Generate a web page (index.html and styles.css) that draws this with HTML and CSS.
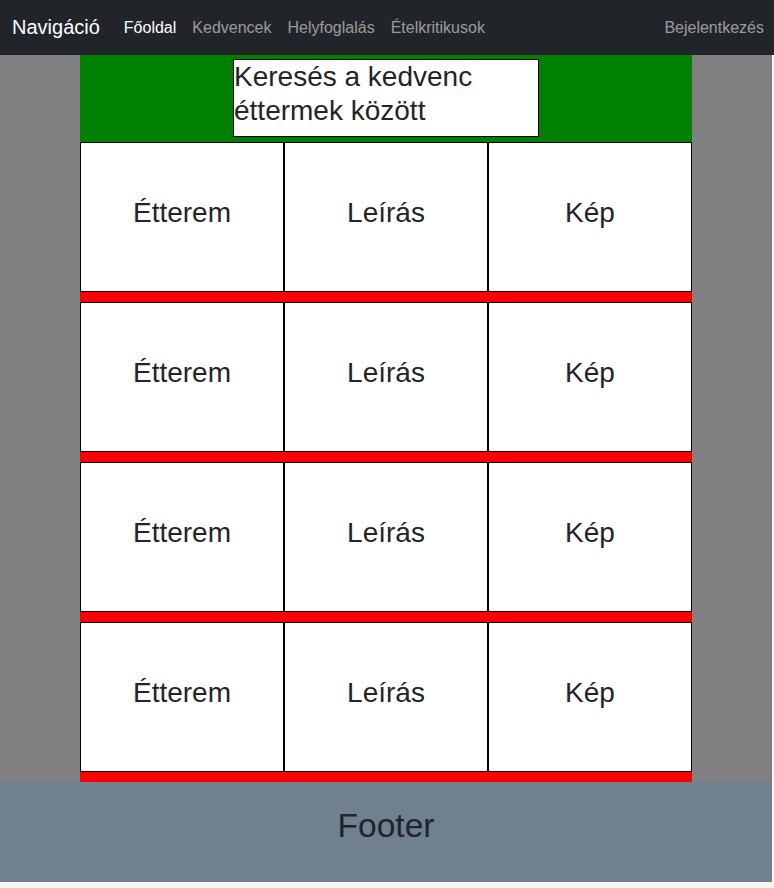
FILE: index.html
```html
<!DOCTYPE html>
<html lang="hu">
<head>
<meta charset="utf-8">
<title>Navigáció</title>
<link rel="stylesheet" href="styles.css">
</head>
<body>
<nav class="navbar">
  <a class="brand" href="#">Navigáció</a>
  <ul class="nav-links">
    <li><a class="nav-link active" href="#">Főoldal</a></li>
    <li><a class="nav-link" href="#">Kedvencek</a></li>
    <li><a class="nav-link" href="#">Helyfoglalás</a></li>
    <li><a class="nav-link" href="#">Ételkritikusok</a></li>
  </ul>
  <a class="nav-link login" href="#">Bejelentkezés</a>
</nav>
<div class="page">
  <main class="main">
    <header class="search-bar">
      <div class="search">Keresés a kedvenc éttermek között</div>
    </header>
    <section class="list">
      <div class="row"><div class="cell">Étterem</div><div class="cell">Leírás</div><div class="cell">Kép</div></div>
      <div class="row"><div class="cell">Étterem</div><div class="cell">Leírás</div><div class="cell">Kép</div></div>
      <div class="row"><div class="cell">Étterem</div><div class="cell">Leírás</div><div class="cell">Kép</div></div>
      <div class="row"><div class="cell">Étterem</div><div class="cell">Leírás</div><div class="cell">Kép</div></div>
    </section>
  </main>
  <footer class="footer">Footer</footer>
</div>
</body>
</html>
```
FILE: styles.css
```css
* { box-sizing: border-box; }
html, body { margin: 0; padding: 0; background: #f6f6f6; }
body {
  font-family: "Liberation Sans", Arial, sans-serif;
  color: #212529;
}
a { text-decoration: none; }

.navbar {
  height: 55px;
  background: #212529;
  display: flex;
  align-items: center;
  padding: 0 10px 0 12px;
}
.brand {
  color: #fff;
  font-size: 20px;
  line-height: 23px;
  margin-right: 16px;
}
.nav-links {
  list-style: none;
  margin: 0;
  padding: 0;
  display: flex;
  flex: 1;
}
.nav-link {
  display: block;
  color: rgba(255, 255, 255, 0.55);
  font-size: 16px;
  line-height: 22px;
  padding: 0 8px;
}
.nav-link.active { color: #fff; }
.nav-link.login { padding-right: 0; }

.page {
  margin-right: 2px;
  background: #808080;
}
.main {
  width: 612px;
  margin: 0 auto;
}
.search-bar {
  background: #008000;
  padding: 4px 0 5px;
}
.search {
  width: 306px;
  height: 78px;
  margin: 0 auto;
  background: #fff;
  border: 1px solid #000;
  font-size: 28px;
  line-height: 1.2;
  color: #212529;
}
.row {
  display: flex;
  border-bottom: 10px solid #ff0000;
}
.cell {
  width: 204px;
  height: 150px;
  background: #fff;
  border: 1px solid #000;
  display: flex;
  align-items: center;
  justify-content: center;
  font-size: 28px;
  padding-bottom: 9px;
}
.footer {
  height: 100px;
  background: #708090;
  text-align: center;
  font-size: 33.6px;
  line-height: 39px;
  padding-top: 24px;
}
```
